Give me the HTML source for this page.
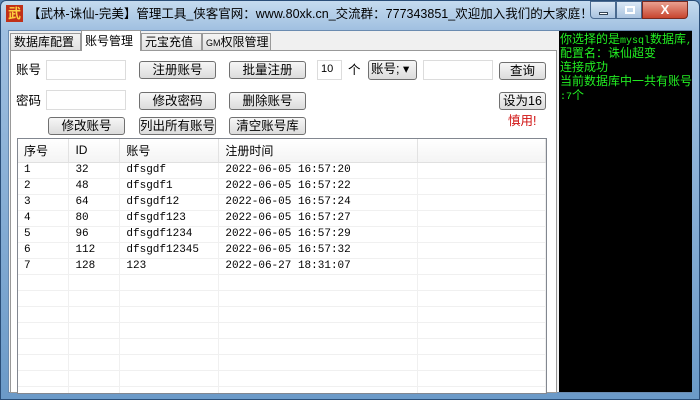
<!DOCTYPE html>
<html><head><meta charset="utf-8"><style>
*{margin:0;padding:0;box-sizing:border-box}
body{width:700px;height:400px;overflow:hidden;background:#5a86b4;font-family:"Liberation Sans","Noto Sans CJK SC",sans-serif;font-size:12px;position:relative}
.a{position:absolute}
#frame{left:0;top:0;width:700px;height:400px;background:linear-gradient(#c5dbef,#9fbfe0 30px,#6b9ac8 100%);border:1px solid #2a4e78;border-radius:6px 6px 0 0}
#client{left:8px;top:30px;width:684px;height:363px;background:#f0f0f0;border:1px solid #6a8bb0}
.title{left:28px;top:7px;font-size:12.5px;line-height:15px;color:#000;white-space:nowrap}
.btn{position:absolute;height:18px;border:1px solid #707070;border-radius:3px;background:linear-gradient(#f6f6f6,#dcdcdc);text-align:center;line-height:16px;font-size:12.5px;white-space:nowrap}
.inp{position:absolute;height:20px;background:#fff;border:1px solid #dcdcdc}
.lbl{position:absolute;font-size:12.5px;line-height:14px;white-space:nowrap}
.tab{position:absolute;top:33px;height:18px;border:1px solid #999;background:linear-gradient(#f4f4f4,#e0e0e0);font-size:12px;line-height:16px;padding:0 3px;white-space:nowrap;overflow:hidden}
#con{left:559px;top:31px;width:133px;height:361px;background:#000;color:#22ee22;font-family:"Liberation Mono","Noto Sans CJK SC",monospace;font-size:10px;padding:1px 1px;white-space:nowrap;overflow:hidden}
#con div{height:14px;line-height:14px;overflow:visible}
#con span{font-size:12px;font-family:"Noto Sans CJK SC",sans-serif}
table{border-collapse:collapse;font-size:11px;font-family:"Liberation Mono","Noto Sans CJK SC",monospace;table-layout:fixed}
td{height:16px;border-right:1px solid #f0f0f0;border-bottom:1px solid #f0f0f0;padding-left:6px;white-space:nowrap;overflow:hidden}
th{height:23px;font-weight:normal;text-align:left;padding-left:6px;font-family:"Liberation Sans","Noto Sans CJK SC",sans-serif;font-size:12px;background:linear-gradient(#fff,#f4f4f4);border-right:1px solid #e2e2e2;border-bottom:1px solid #e0e0e0}
</style></head><body>
<div id="frame" class="a"></div>
<div class="a" style="left:6px;top:5px;width:17px;height:17px;background:#c03018;color:#ffd040;font-size:13px;line-height:17px;text-align:center;font-weight:bold">武</div>
<div class="a title">【武林-诛仙-完美】管理工具_侠客官网：www.80xk.cn_交流群：777343851_欢迎加入我们的大家庭！</div>
<div class="a" style="left:590px;top:1px;width:26px;height:18px;border:1px solid #4a6a90;border-radius:0 0 0 4px;background:linear-gradient(#dbe8f5,#a9c3e0)"><div class="a" style="left:8px;top:10px;width:9px;height:3px;background:#fff;border:1px solid #345"></div></div>
<div class="a" style="left:616px;top:1px;width:26px;height:18px;border:1px solid #4a6a90;background:linear-gradient(#dbe8f5,#a9c3e0)"><div class="a" style="left:8px;top:4px;width:10px;height:8px;border:2px solid #fff"></div></div>
<div class="a" style="left:642px;top:1px;width:46px;height:18px;border:1px solid #7a2a20;border-radius:0 0 4px 0;background:linear-gradient(#e8a090,#c8452e);color:#fff;text-align:center;font-weight:bold;font-size:13px;line-height:16px">X</div>
<div id="client" class="a"></div>
<div class="a" style="left:10px;top:50px;width:547px;height:343px;background:#fff;border:1px solid #999"></div>
<div class="tab" style="left:10px;width:71px">数据库配置</div>
<div class="tab" style="left:81px;top:30px;height:21px;width:60px;background:#fff;border-bottom:none;line-height:20px">账号管理</div>
<div class="tab" style="left:141px;width:61px">元宝充值</div>
<div class="tab" style="left:202px;width:69px"><span style="font-size:9px">GM</span>权限管理</div>
<div class="lbl" style="left:16px;top:63px">账号</div>
<div class="inp" style="left:46px;top:60px;width:80px"></div>
<div class="btn" style="left:139px;top:61px;width:77px">注册账号</div>
<div class="btn" style="left:229px;top:61px;width:77px">批量注册</div>
<div class="inp" style="left:317px;top:60px;width:25px;font-size:11px;padding:2px 0 0 3px">10</div>
<div class="lbl" style="left:348px;top:63px">个</div>
<div class="btn" style="left:368px;top:60px;width:49px;height:20px;text-align:left;padding-left:2px">账号; ▾</div>
<div class="inp" style="left:423px;top:60px;width:70px"></div>
<div class="btn" style="left:499px;top:62px;width:47px">查询</div>
<div class="lbl" style="left:16px;top:94px">密码</div>
<div class="inp" style="left:46px;top:90px;width:80px"></div>
<div class="btn" style="left:139px;top:92px;width:77px">修改密码</div>
<div class="btn" style="left:229px;top:92px;width:77px">删除账号</div>
<div class="btn" style="left:499px;top:92px;width:47px">设为16</div>
<div class="lbl" style="left:508px;top:114px;color:#d01010">慎用!</div>
<div class="btn" style="left:48px;top:117px;width:77px">修改账号</div>
<div class="btn" style="left:139px;top:117px;width:77px">列出所有账号</div>
<div class="btn" style="left:229px;top:117px;width:77px">清空账号库</div>
<div class="a" style="left:17px;top:138px;width:530px;height:256px;border:1px solid #828790;background:#fff;overflow:hidden">
<table>
<tr><th style="width:51px">序号</th><th style="width:51px">ID</th><th style="width:99px">账号</th><th style="width:199px">注册时间</th><th style="width:128px"></th></tr>
<tr><td>1</td><td>32</td><td>dfsgdf</td><td>2022-06-05 16:57:20</td><td></td></tr>
<tr><td>2</td><td>48</td><td>dfsgdf1</td><td>2022-06-05 16:57:22</td><td></td></tr>
<tr><td>3</td><td>64</td><td>dfsgdf12</td><td>2022-06-05 16:57:24</td><td></td></tr>
<tr><td>4</td><td>80</td><td>dfsgdf123</td><td>2022-06-05 16:57:27</td><td></td></tr>
<tr><td>5</td><td>96</td><td>dfsgdf1234</td><td>2022-06-05 16:57:29</td><td></td></tr>
<tr><td>6</td><td>112</td><td>dfsgdf12345</td><td>2022-06-05 16:57:32</td><td></td></tr>
<tr><td>7</td><td>128</td><td>123</td><td>2022-06-27 18:31:07</td><td></td></tr>
<tr><td></td><td></td><td></td><td></td><td></td></tr>
<tr><td></td><td></td><td></td><td></td><td></td></tr>
<tr><td></td><td></td><td></td><td></td><td></td></tr>
<tr><td></td><td></td><td></td><td></td><td></td></tr>
<tr><td></td><td></td><td></td><td></td><td></td></tr>
<tr><td></td><td></td><td></td><td></td><td></td></tr>
<tr><td></td><td></td><td></td><td></td><td></td></tr>
<tr><td></td><td></td><td></td><td></td><td></td></tr>
<tr><td></td><td></td><td></td><td></td><td></td></tr>
</table></div>
<div id="con" class="a"><div><span>你选择的是</span>mysql<span>数据库</span>,</div><div><span>配置名：诛仙超变</span></div><div><span>连接成功</span></div><div><span>当前数据库中一共有账号</span></div><div>:7<span>个</span></div></div>
</body></html>
